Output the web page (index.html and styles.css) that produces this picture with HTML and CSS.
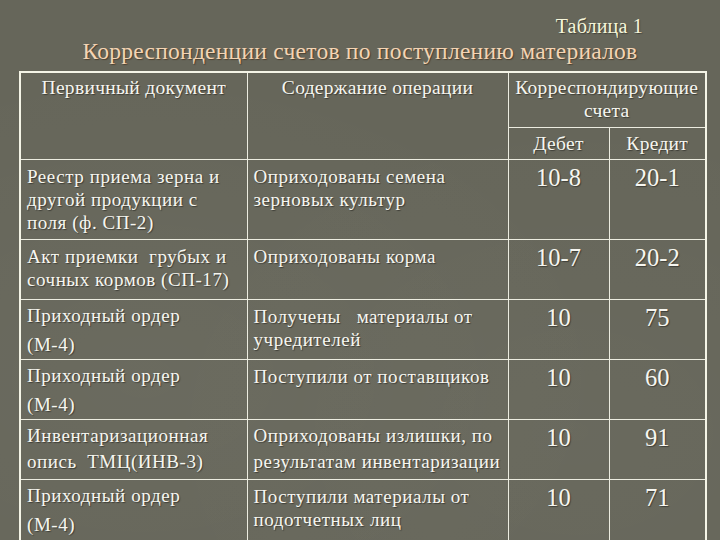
FILE: index.html
```html
<!DOCTYPE html>
<html lang="ru">
<head>
<meta charset="utf-8">
<title>Корреспонденции счетов</title>
<link rel="stylesheet" href="styles.css">
</head>
<body>
<div class="slide">
  <div class="caption">Таблица 1</div>
  <h1 class="heading">Корреспонденции счетов по поступлению материалов</h1>
  <table class="grid">
    <colgroup>
      <col class="c1"><col class="c2"><col class="c3"><col class="c4">
    </colgroup>
    <tr class="h1">
      <th rowspan="2">Первичный документ</th>
      <th rowspan="2">Содержание операции</th>
      <th colspan="2" class="corr">Корреспондирующие<br>счета</th>
    </tr>
    <tr class="h2">
      <th>Дебет</th>
      <th>Кредит</th>
    </tr>
    <tr class="r1">
      <td>Реестр приема зерна и<br>другой продукции с<br>поля (ф. СП-2)</td>
      <td>Оприходованы семена<br>зерновых культур</td>
      <td class="num">10-8</td>
      <td class="num">20-1</td>
    </tr>
    <tr class="r2">
      <td>Акт приемки&nbsp; грубых и<br>сочных кормов (СП-17)</td>
      <td>Оприходованы корма</td>
      <td class="num">10-7</td>
      <td class="num">20-2</td>
    </tr>
    <tr class="r3">
      <td class="wide">Приходный ордер<br>(М-4)</td>
      <td>Получены&nbsp;&nbsp; материалы от<br>учредителей</td>
      <td class="num">10</td>
      <td class="num">75</td>
    </tr>
    <tr class="r4">
      <td class="wide">Приходный ордер<br>(М-4)</td>
      <td>Поступили от поставщиков</td>
      <td class="num">10</td>
      <td class="num">60</td>
    </tr>
    <tr class="r5">
      <td class="mid">Инвентаризационная<br>опись&nbsp; ТМЦ(ИНВ-3)</td>
      <td class="mid">Оприходованы излишки, по<br>результатам инвентаризации</td>
      <td class="num">10</td>
      <td class="num">91</td>
    </tr>
    <tr class="r6">
      <td class="wide">Приходный ордер<br>(М-4)</td>
      <td>Поступили материалы от<br>подотчетных лиц</td>
      <td class="num">10</td>
      <td class="num">71</td>
    </tr>
  </table>
</div>
</body>
</html>
```

FILE: styles.css
```css
html, body {
  margin: 0;
  padding: 0;
}

body {
  width: 720px;
  height: 540px;
  overflow: hidden;
  background: #66665a;
  font-family: "Liberation Serif", "Times New Roman", serif;
  color: #f6f6f0;
}

.slide {
  width: 720px;
  height: 540px;
  padding-top: 17px;
  box-sizing: border-box;
  background:
    radial-gradient(ellipse at 20% 70%, rgba(255,255,255,0.03), rgba(0,0,0,0) 60%),
    radial-gradient(ellipse at 80% 80%, rgba(255,255,255,0.025), rgba(0,0,0,0) 55%),
    #66665a;
}

.caption {
  font-size: 20px;
  line-height: 19px;
  letter-spacing: 0.2px;
  color: #f6f6da;
  text-align: right;
  padding-right: 77px;
  text-shadow: 1px 1px 1px rgba(0,0,0,0.35);
}

.heading {
  margin: 3px 0 0 0;
  font-weight: normal;
  font-size: 23.5px;
  line-height: 24px;
  letter-spacing: 0.25px;
  text-align: center;
  color: #f3d4b4;
  text-shadow: 1px 1px 1px rgba(60,40,20,0.6);
}

.grid {
  margin: 8px 0 0 19px;
  border-collapse: collapse;
  table-layout: fixed;
  width: 688px;
  border: 2px solid #f4f4e6;
}

.c1 { width: 227px; }
.c2 { width: 261px; }
.c3 { width: 101px; }
.c4 { width: 97px; }

.grid th,
.grid td {
  border: 1px solid #ecece0;
  vertical-align: top;
  padding: 0;
  text-shadow: 1px 1px 1px rgba(0,0,0,0.4);
}

.grid th {
  font-weight: normal;
  font-size: 19.5px;
  line-height: 23px;
  letter-spacing: 0.3px;
  text-align: center;
  padding-top: 3px;
}

.h1 { height: 55px; }
.h2 { height: 32px; }
.h2 th { padding-top: 4px; }

.grid td {
  font-size: 19px;
  line-height: 23px;
  letter-spacing: 0.55px;
  padding: 5px 2px 0 6px;
}

.grid td.wide {
  line-height: 29px;
  padding-top: 1px;
}

.grid td.mid {
  line-height: 26px;
  padding-top: 3px;
}

.grid td.num {
  font-size: 24.5px;
  line-height: 28px;
  letter-spacing: 0;
  text-align: center;
  padding: 4px 0 0 0;
}

.r1 { height: 80px; }
.r2 { height: 60px; }
.r3 { height: 59px; }
.r4 { height: 60px; }
.r5 { height: 60px; }
.r6 { height: 70px; }
```
